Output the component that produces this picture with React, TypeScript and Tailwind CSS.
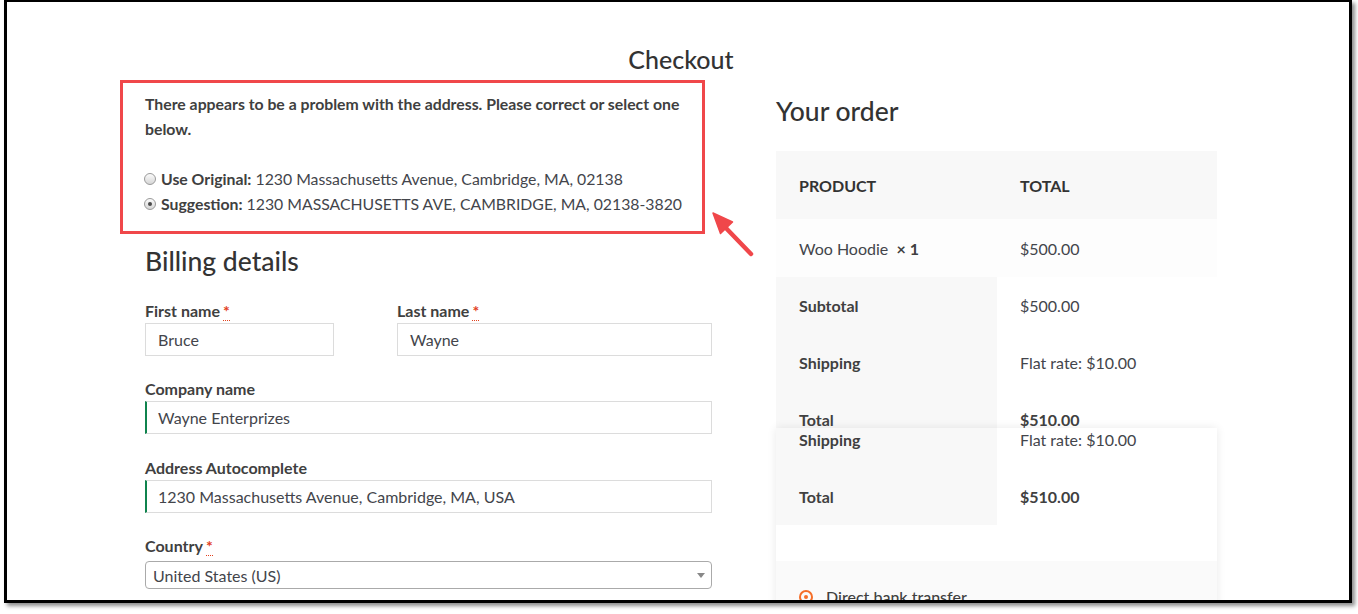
import React from 'react';

const font = "font-['Lato','Noto_Sans',sans-serif]";

function Req() {
  return (
    <abbr className="ml-[3px] text-[#e2401c] no-underline border-b border-dotted border-[#e2401c] font-bold leading-none" title="required">
      *
    </abbr>
  );
}

function Radio({ checked }: { checked?: boolean }) {
  return (
    <span className="mr-[5px] ml-[-1px] inline-flex h-[12px] w-[12px] shrink-0 items-center justify-center rounded-full border border-[#9a9a9a] bg-gradient-to-b from-[#fbfbfb] to-[#d6d6d6]">
      {checked && <span className="h-[4px] w-[4px] rounded-full bg-[#4a4a4a]" />}
    </span>
  );
}

function Field({
  label,
  value,
  required,
  accent,
  width,
  mt,
}: {
  label: string;
  value: string;
  required?: boolean;
  accent?: boolean;
  width: string;
  mt: string;
}) {
  return (
    <div className={`${width} ${mt}`}>
      <label className="block h-[22px] text-[16px] font-bold leading-[22px] text-[#404040]">
        {label}
        {required && <Req />}
      </label>
      <div
        className={`mt-[1px] flex h-[33px] items-center border border-[#dcdcdc] pt-[1px] text-[16px] text-[#43454b] ${
          accent ? 'border-l-2 border-l-[#0f834d] pl-[11px]' : 'pl-[12px]'
        }`}
      >
        {value}
      </div>
    </div>
  );
}

export default function App() {
  return (
    <div className={`h-[614px] w-[1358px] bg-white ${font}`}>
      <div className="relative ml-[4px] h-[603px] w-[1348px] overflow-hidden border-[3px] border-t-2 border-black bg-white shadow-[3px_3px_4px_rgba(0,0,0,0.45)]">
        <div className="ml-[138px] w-[1072px] pt-[42px]">
          <h1 className="text-center text-[25px] font-medium leading-[31px] text-[#333333]">Checkout</h1>

          <div className="mt-[5px] flex gap-[64px]">
            {/* left column */}
            <div className="w-[567px]">
              <div className="ml-[-25px] w-[585px] border-[3px] border-[#f0474a] pb-[15px] pl-[22px] pr-[2px] pt-[8px] text-[15.8px] leading-[25px] text-[#43454b]">
                <p className="font-bold text-[#404040]">
                  There appears to be a problem with the address. Please correct or select one below.
                </p>
                <div className="h-[25px]" />
                <div className="flex items-center">
                  <Radio />
                  <span>
                    <b className="text-[#404040]">Use Original:</b> 1230 Massachusetts Avenue, Cambridge, MA, 02138
                  </span>
                </div>
                <div className="flex items-center">
                  <Radio checked />
                  <span>
                    <b className="text-[#404040]">Suggestion:</b> 1230 MASSACHUSETTS AVE, CAMBRIDGE, MA, 02138-3820
                  </span>
                </div>
              </div>

              <h3 className="mt-[12px] text-[26.5px] font-medium leading-[31px] text-[#333333]">Billing details</h3>

              <div className="flex justify-between">
                <Field label="First name" value="Bruce" required width="w-[189px]" mt="mt-[23px]" />
                <Field label="Last name" value="Wayne" required width="w-[315px]" mt="mt-[23px]" />
              </div>
              <Field label="Company name" value="Wayne Enterprizes" accent width="w-[567px]" mt="mt-[22px]" />
              <Field
                label="Address Autocomplete"
                value="1230 Massachusetts Avenue, Cambridge, MA, USA"
                accent
                width="w-[567px]"
                mt="mt-[23px]"
              />

              <div className="mt-[22px]">
                <label className="block h-[22px] text-[16px] font-bold leading-[22px] text-[#404040]">
                  Country
                  <Req />
                </label>
                <div className="mt-[4px] flex h-[28px] items-center justify-between rounded-[4px] border border-[#aaaaaa] pl-[7px] pr-[6px] pt-[1px] text-[16px] text-[#43454b]">
                  <span>United States (US)</span>
                  <span className="h-0 w-0 border-x-[4px] border-t-[5px] border-x-transparent border-t-[#888888]" />
                </div>
              </div>
            </div>

            {/* right column */}
            <div className="w-[441px]">
              <h3 className="mt-[16px] text-[26.5px] font-medium leading-[31px] text-[#333333]">Your order</h3>

              <div className="mt-[24px] text-[16px] text-[#43454b]">
                <div className="grid h-[68px] grid-cols-[221px_220px] items-center bg-[#f8f8f8] pt-[1px] font-bold uppercase text-[#333333]">
                  <div className="pl-[23px]">Product</div>
                  <div className="pl-[23px]">Total</div>
                </div>
                <div className="grid h-[58px] grid-cols-[221px_220px] items-center bg-[#fdfdfd] pt-[1px]">
                  <div className="pl-[23px]">
                    Woo Hoodie&nbsp; <b className="text-[#404040]">× 1</b>
                  </div>
                  <div className="pl-[23px]">$500.00</div>
                </div>

                <div className="bg-[linear-gradient(to_right,#f8f8f8_221px,#ffffff_221px)]">
                  {[
                    ['Subtotal', '$500.00', false],
                    ['Shipping', 'Flat rate: $10.00', false],
                    ['Total', '$510.00', true],
                  ].map(([k, v, strong]) => (
                    <div key={k as string} className="grid h-[57px] grid-cols-[221px_220px] items-center pt-[1px]">
                      <div className="pl-[23px] font-bold text-[#404040]">{k}</div>
                      <div className={`pl-[23px] ${strong ? 'font-bold text-[#404040]' : ''}`}>{v}</div>
                    </div>
                  ))}
                  <div className="mt-[-37px]">
                    <div className="grid h-[57px] grid-cols-[221px_220px] items-center pt-[1px]">
                      <div className="pl-[23px] font-bold text-[#404040]">Shipping</div>
                      <div className="pl-[23px]">Flat rate: $10.00</div>
                    </div>
                    <div className="grid h-[57px] grid-cols-[221px_220px] items-center pt-[1px]">
                      <div className="pl-[23px] font-bold text-[#404040]">Total</div>
                      <div className="pl-[23px] font-bold text-[#404040]">$510.00</div>
                    </div>
                  </div>
                </div>

                <div className="mt-[-97px] pt-[133px] shadow-[0_0_9px_rgba(0,0,0,0.09)]">
                  <div className="h-[80px] bg-[#fafafa] pl-[23px] pt-[25px]">
                    <div className="flex h-[22px] items-center">
                      <span className="mr-[13px] flex h-[14px] w-[14px] items-center justify-center rounded-full border-2 border-[#f56e28]">
                        <span className="h-[4px] w-[4px] rounded-full bg-[#f56e28]" />
                      </span>
                      <span className="font-medium text-[#404040]">Direct bank transfer</span>
                    </div>
                  </div>
                </div>
              </div>
            </div>
          </div>
        </div>

        {/* annotation arrow */}
        <svg className="absolute left-[698px] top-[203px]" width="56" height="56" viewBox="0 0 56 56">
          <line x1="46" y1="49" x2="19" y2="21" stroke="#f0474a" strokeWidth="4.5" strokeLinecap="round" />
          <polygon points="8,8 15.5,28.5 27.5,17" fill="#f0474a" stroke="#f0474a" strokeWidth="1.5" strokeLinejoin="round" />
        </svg>
      </div>
    </div>
  );
}
